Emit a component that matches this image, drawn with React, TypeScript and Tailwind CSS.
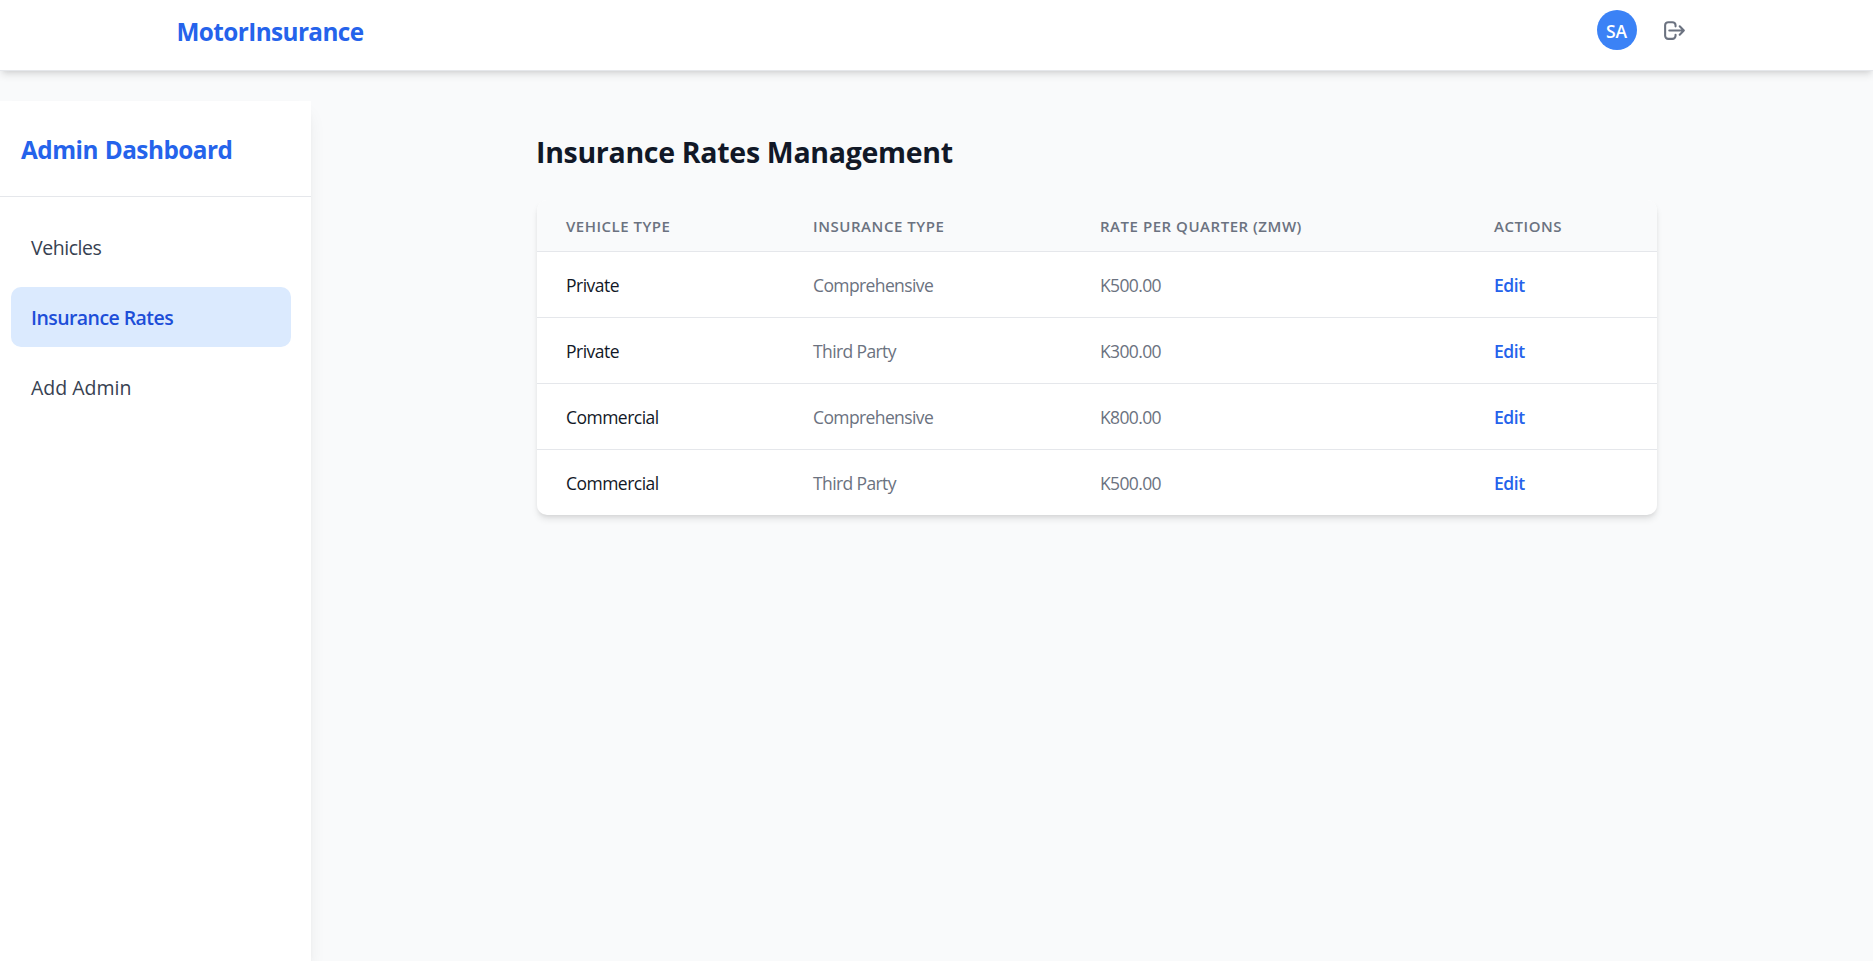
import { HiOutlineLogout } from "react-icons/hi";

const navItems = [
  { label: "Vehicles", active: false, tracking: "tracking-[-0.45px]" },
  { label: "Insurance Rates", active: true, tracking: "tracking-[-0.56px]" },
  { label: "Add Admin", active: false, tracking: "tracking-[0px]" },
];

const columns = [
  { label: "Vehicle Type", className: "pl-[29px] w-[246px] tracking-[0.5px]" },
  { label: "Insurance Type", className: "pl-[30px] w-[287px] tracking-[0.56px]" },
  { label: "Rate Per Quarter (ZMW)", className: "pl-[30px] w-[394px] tracking-[0.53px]" },
  { label: "Actions", className: "pl-[30px] w-[193px] tracking-[0.55px]" },
];

const rates = [
  { vehicle: "Private", insurance: "Comprehensive", rate: "K500.00" },
  { vehicle: "Private", insurance: "Third Party", rate: "K300.00" },
  { vehicle: "Commercial", insurance: "Comprehensive", rate: "K800.00" },
  { vehicle: "Commercial", insurance: "Third Party", rate: "K500.00" },
];

function Header() {
  return (
    <header className="h-[71px] shrink-0 border-b border-[#e5e7eb] bg-white shadow-[0_5px_7.5px_-1.25px_rgba(0,0,0,0.1),0_2.5px_5px_-2.5px_rgba(0,0,0,0.1)]">
      <div className="mx-auto flex h-[60px] w-[1600px] items-center justify-between px-10">
        <span className="pt-[3px] text-[24.3px] leading-9 font-bold tracking-[-0.58px] text-[#2563eb]">
          MotorInsurance
        </span>
        <div className="flex items-center gap-[15px]">
          <div className="flex size-10 items-center justify-center rounded-full bg-[#3b82f6] pt-0.5 text-[17.5px] font-semibold text-white">
            SA
          </div>
          <button type="button" aria-label="Log out" className="p-2.5 text-[#6b7280]">
            <HiOutlineLogout className="size-[25px]" />
          </button>
        </div>
      </div>
    </header>
  );
}

function Sidebar() {
  return (
    <aside className="w-[311px] shrink-0 bg-white shadow-[0_12.5px_18.75px_-3.75px_rgba(0,0,0,0.1),0_5px_7.5px_-5px_rgba(0,0,0,0.1)]">
      <div className="flex h-24 items-center border-b border-[#e5e7eb] pt-[3px] pl-[21px]">
        <h2 className="text-[24.3px] leading-9 font-bold tracking-[-0.5px] [word-spacing:1px] text-[#2563eb]">
          Admin Dashboard
        </h2>
      </div>
      <nav className="flex flex-col gap-2.5 pt-5 pr-5 pl-[11px]">
        {navItems.map((item) => (
          <a
            key={item.label}
            href="#"
            className={`flex h-[60px] items-center rounded-[10px] px-5 pt-px text-[19.5px] ${item.tracking} ${
              item.active ? "bg-[#dbeafe] font-semibold text-[#1d4ed8]" : "text-[#374151]"
            }`}
          >
            {item.label}
          </a>
        ))}
      </nav>
    </aside>
  );
}

function RatesTable() {
  return (
    <div className="w-[1120px] overflow-hidden rounded-[10px] bg-white shadow-[0_5px_7.5px_-1.25px_rgba(0,0,0,0.1),0_2.5px_5px_-2.5px_rgba(0,0,0,0.1)]">
      <table className="w-full table-fixed text-left">
        <thead className="bg-[#f9fafb]">
          <tr className="h-[51px]">
            {columns.map((c) => (
              <th
                key={c.label}
                className={`pt-[2px] align-middle text-[15px] leading-5 font-semibold whitespace-nowrap text-[#6b7280] uppercase ${c.className}`}
              >
                {c.label}
              </th>
            ))}
          </tr>
        </thead>
        <tbody>
          {rates.map((r) => (
            <tr
              key={r.vehicle + r.insurance}
              className="h-[66px] border-t border-[#e5e7eb] text-[17.5px] leading-[25px] text-[#6b7280]"
            >
              <td className="pt-[3px] pl-[29px] tracking-[-0.52px] text-[#111827]">{r.vehicle}</td>
              <td className="pt-[3px] pl-[30px] tracking-[-0.61px]">{r.insurance}</td>
              <td className="pt-[3px] pl-[30px] tracking-[-0.64px]">{r.rate}</td>
              <td className="pt-[3px] pl-[30px]">
                <button type="button" className="font-semibold tracking-[-0.4px] text-[#2563eb]">
                  Edit
                </button>
              </td>
            </tr>
          ))}
        </tbody>
      </table>
    </div>
  );
}

export default function App() {
  return (
    <div className="flex h-screen flex-col overflow-hidden bg-[#f9fafb] font-['Open_Sans',sans-serif]">
      <Header />
      <div className="flex flex-1 pt-[30px]">
        <Sidebar />
        <main className="flex-1 pt-[30px] pl-[226px]">
          <h1 className="-ml-px mb-[27px] text-[28.5px] leading-[42px] font-bold tracking-[-0.3px] text-[#111827]">
            Insurance Rates Management
          </h1>
          <RatesTable />
        </main>
      </div>
    </div>
  );
}
